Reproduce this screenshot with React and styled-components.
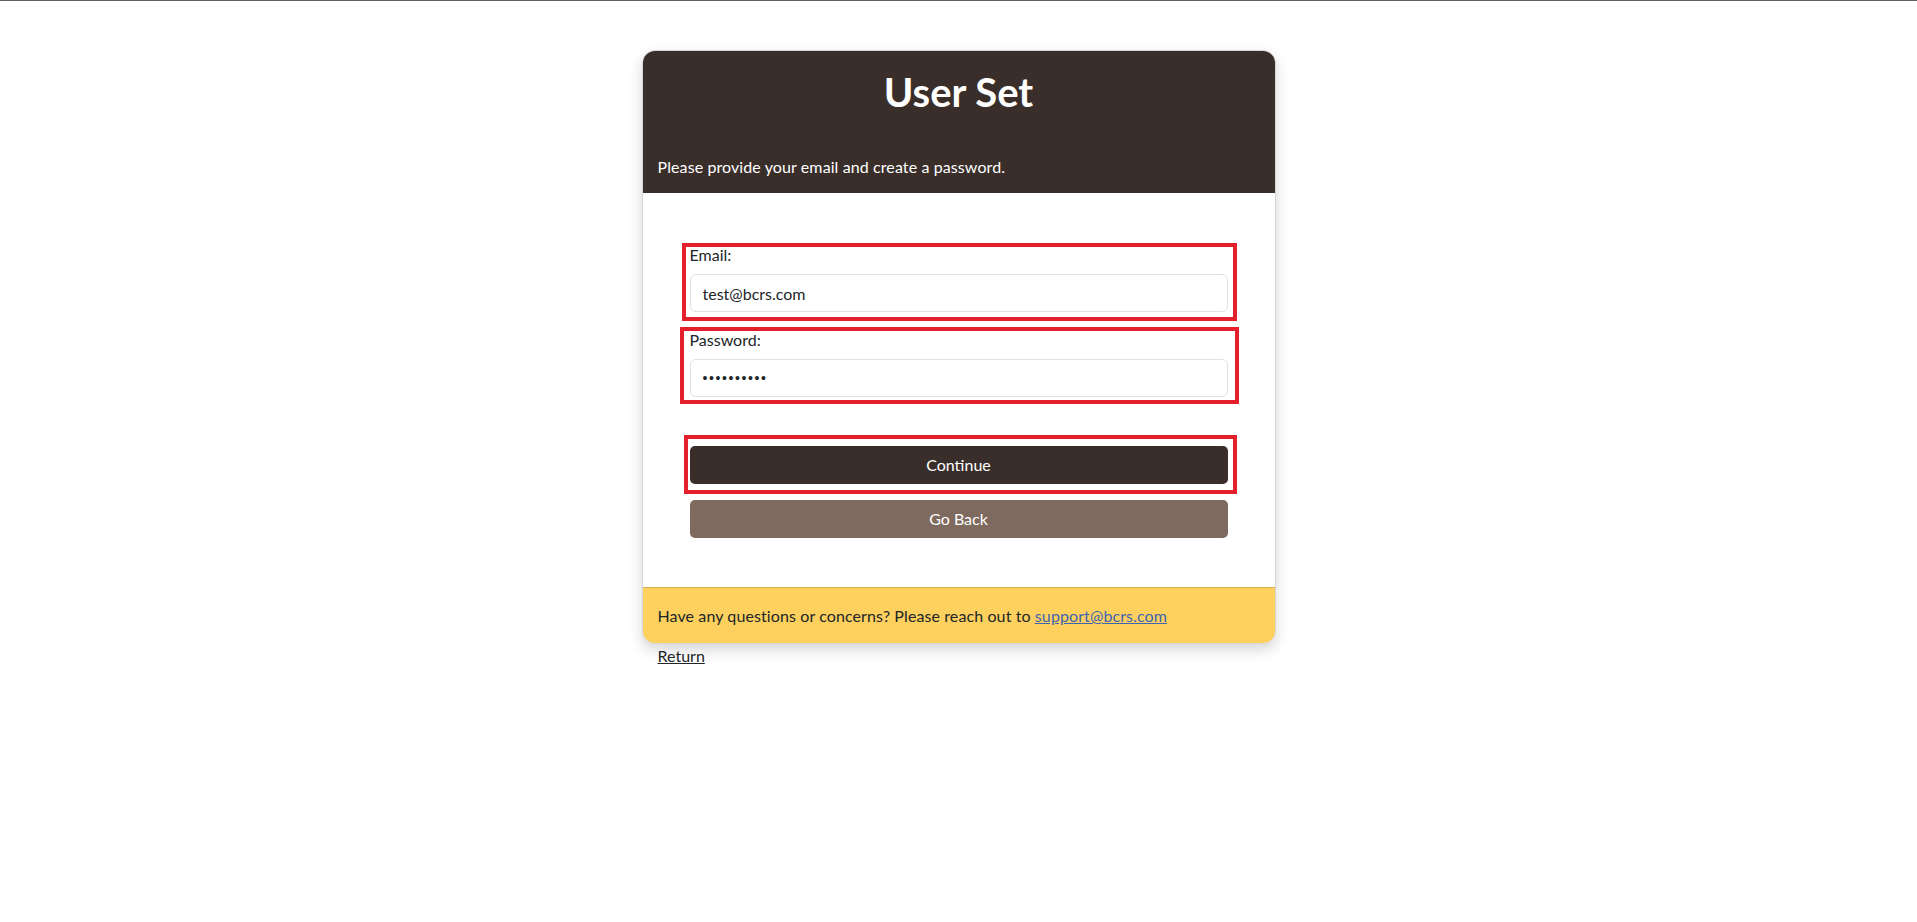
import React from "react";
import styled, { createGlobalStyle } from "styled-components";

const Global = createGlobalStyle`
  html, body { margin: 0; padding: 0; background: #ffffff; }
  body {
    font-family: "Segoe UI", Lato, "Noto Sans", "Liberation Sans", sans-serif;
    font-size: 16px;
    line-height: 24px;
    color: #212529;
    border-top: 1px solid #5f5f5f;
  }
  * { box-sizing: border-box; }
`;

const Page = styled.main`
  display: flex;
  justify-content: center;
  padding-top: 49px;
`;

const Wrapper = styled.div`
  width: 634px;
  display: flex;
  flex-direction: column;
`;

const Card = styled.section`
  border: 1px solid #d6d6d6;
  border-radius: 13px;
  overflow: hidden;
  background: #ffffff;
  box-shadow: 0 6px 14px rgba(0, 0, 0, 0.16);
`;

const Header = styled.header`
  background: #3a2e2a;
  color: #ffffff;
  padding: 17px 15px 14px;
`;

const Title = styled.h1`
  margin: 0 0 39px;
  font-size: 40px;
  line-height: 48px;
  font-weight: 700;
  text-align: center;
`;

const Subtitle = styled.p`
  margin: 0;
  font-size: 16px;
  line-height: 24px;
  letter-spacing: 0.1px;
`;

const Body = styled.div`
  padding: 50px 47px 49px;
  display: flex;
  flex-direction: column;
`;

const Marked = styled.div`
  position: relative;
  margin-top: ${(p) => p.$mt || 0}px;
  &::after {
    content: "";
    position: absolute;
    inset: ${(p) => p.$mark};
    border: 4px solid #e3202c;
    pointer-events: none;
  }
`;

const Field = styled.div`
  display: flex;
  flex-direction: column;
  gap: 7px;
`;

const Label = styled.label`
  font-size: 16px;
  line-height: 24px;
  color: #212529;
`;

const Input = styled.input`
  height: 38px;
  width: 100%;
  padding: 6px 12px;
  font: inherit;
  font-size: 16px;
  color: #212529;
  background: #ffffff;
  border: 1px solid #dee2e6;
  border-radius: 6px;
  outline: none;
  &[type="password"] {
    font-family: "Liberation Sans", Arial, sans-serif;
    font-size: 14px;
    letter-spacing: 1.6px;
  }
`;

const Button = styled.button`
  display: block;
  width: 100%;
  height: 38px;
  margin-top: ${(p) => p.$mt || 0}px;
  border: none;
  border-radius: 5px;
  font: inherit;
  font-size: 16px;
  color: #ffffff;
  background: ${(p) => (p.$variant === "secondary" ? "#7e6a5e" : "#3a2e2a")};
  cursor: pointer;
`;

const Footer = styled.footer`
  background: #fed15e;
  border-top: 1px solid #d5ae4e;
  padding: 16px 15px 15px;
  font-size: 16px;
  line-height: 24px;
  letter-spacing: 0.1px;
  color: #212529;
`;

const MailLink = styled.a`
  color: #3e64b2;
  text-decoration: underline;
`;

const ReturnLink = styled.a`
  align-self: flex-start;
  margin-left: 16px;
  color: #212529;
  text-decoration: underline;
  font-size: 16px;
  line-height: 24px;
`;

export default function App() {
  return (
    <>
      <Global />
      <Page>
        <Wrapper>
          <Card>
            <Header>
              <Title>User Set</Title>
              <Subtitle>Please provide your email and create a password.</Subtitle>
            </Header>
            <Body>
              <Marked $mark="0 -9px -9px -8px">
                <Field>
                  <Label htmlFor="email">Email:</Label>
                  <Input id="email" type="email" defaultValue="test@bcrs.com" />
                </Field>
              </Marked>
              <Marked $mt={16} $mark="-1px -11px -7px -10px">
                <Field>
                  <Label htmlFor="password">Password:</Label>
                  <Input id="password" type="password" defaultValue="1234567890" />
                </Field>
              </Marked>
              <Marked $mt={49} $mark="-11px -9px -10px -6px">
                <Button type="button">Continue</Button>
              </Marked>
              <Button type="button" $variant="secondary" $mt={16}>
                Go Back
              </Button>
            </Body>
            <Footer>
              Have any questions or concerns? Please reach out to{" "}
              <MailLink href="#">support@bcrs.com</MailLink>
            </Footer>
          </Card>
          <ReturnLink href="#">Return</ReturnLink>
        </Wrapper>
      </Page>
    </>
  );
}
